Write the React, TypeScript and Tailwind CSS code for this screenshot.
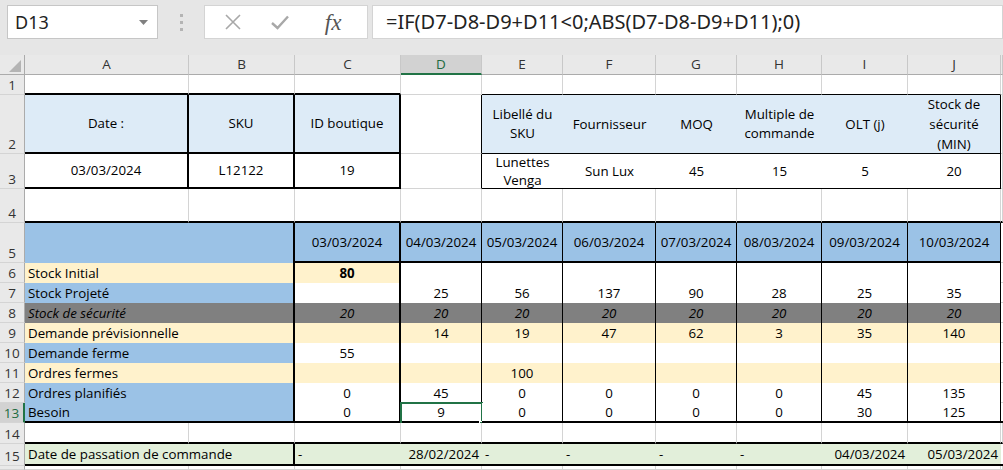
import clsx from "clsx";
import type { ReactNode } from "react";

// border kinds: g = gridline, t = thin black, T = thick black, n = none
type Br = "g" | "t" | "T" | "n";
type Align = "c" | "l" | "r";

const RIGHT: Record<Br, string> = {
  g: "border-r border-r-[#d4d4d4]",
  t: "border-r border-r-black",
  T: "border-r-2 border-r-black",
  n: "",
};
const BOTTOM: Record<Br, string> = {
  g: "border-b border-b-[#d4d4d4]",
  t: "border-b border-b-black",
  T: "border-b-2 border-b-black",
  n: "",
};
const ALIGN: Record<Align, string> = {
  c: "justify-center text-center",
  l: "justify-start pl-[3px]",
  r: "justify-end pr-[3px]",
};

const FILL = {
  w: "bg-white",
  lb: "bg-[#ddebf7]",
  b: "bg-[#9bc2e6]",
  o: "bg-[#fff2cc]",
  g: "bg-[#808080]",
  gr: "bg-[#e2efda]",
  none: "bg-white",
};
type Fill = keyof typeof FILL;

type CellProps = {
  text?: ReactNode;
  span?: boolean;
  fill?: Fill;
  r?: Br;
  b?: Br;
  align?: Align;
  bold?: boolean;
  italic?: boolean;
  children?: ReactNode;
};

function Cell({ text, span, fill = "none", r = "g", b = "g", align = "c", bold, italic, children }: CellProps) {
  return (
    <div
      className={clsx(
        "relative flex items-center whitespace-nowrap text-black",
        span && "col-span-2",
        FILL[fill],
        RIGHT[r],
        BOTTOM[b],
        ALIGN[align],
        bold && "font-bold",
        italic && "italic"
      )}
    >
      {text}
      {children}
    </div>
  );
}

function RowHead({ n, active }: { n: number | string; active?: boolean }) {
  return (
    <div
      className={clsx(
        "flex items-end justify-center border-b border-b-[#d4d4d4] text-[13.5px] leading-[18px]",
        active
          ? "bg-[#d2d2d2] text-[#1e6b41] border-r-2 border-r-[#217346]"
          : "bg-[#e9e9e9] text-[#333] border-r border-r-[#ababab]"
      )}
    >
      {n}
    </div>
  );
}

const COLS = ["A", "B", "C", "D", "E", "F", "G", "H", "I", "J", ""];

const DATES = ["04/03/2024", "05/03/2024", "06/03/2024", "07/03/2024", "08/03/2024", "09/03/2024", "10/03/2024"];

const ROWS: { label: string; lf: Fill; cf: Fill; df: Fill; c: string; d: string[]; bold?: boolean; italic?: boolean }[] = [
  { label: "Stock Initial", lf: "o", cf: "o", df: "w", c: "80", d: ["", "", "", "", "", "", ""], bold: true },
  { label: "Stock Projeté", lf: "b", cf: "w", df: "w", c: "", d: ["25", "56", "137", "90", "28", "25", "35"] },
  { label: "Stock de sécurité", lf: "g", cf: "g", df: "g", c: "20", d: ["20", "20", "20", "20", "20", "20", "20"], italic: true },
  { label: "Demande prévisionnelle", lf: "o", cf: "o", df: "o", c: "", d: ["14", "19", "47", "62", "3", "35", "140"] },
  { label: "Demande ferme", lf: "b", cf: "w", df: "w", c: "55", d: ["", "", "", "", "", "", ""] },
  { label: "Ordres fermes", lf: "o", cf: "o", df: "o", c: "", d: ["", "100", "", "", "", "", ""] },
  { label: "Ordres planifiés", lf: "b", cf: "w", df: "w", c: "0", d: ["45", "0", "0", "0", "0", "45", "135"] },
  { label: "Besoin", lf: "b", cf: "w", df: "w", c: "0", d: ["9", "0", "0", "0", "0", "30", "125"] },
];

const XIcon = () => (
  <svg width="16" height="16" viewBox="0 0 16 16" fill="none" stroke="#a8a8a8" strokeWidth="1.6">
    <path d="M1 1l14 14M15 1L1 15" />
  </svg>
);
const CheckIcon = () => (
  <svg width="18" height="15" viewBox="0 0 18 15" fill="none" stroke="#a8a8a8" strokeWidth="2.4">
    <polyline points="1 8 6.5 13 17 1.5" />
  </svg>
);

function FormulaBar() {
  return (
    <div className="h-[55px] bg-[#e6e6e6] flex items-start pt-[5px] pl-[7px] font-['Noto_Sans',sans-serif]">
      <div className="w-[151px] h-[34px] bg-white border border-[#c6c6c6] flex items-center justify-between pl-[7px] pr-[9px] text-[18px] text-[#222]">
        <span>D13</span>
        <svg width="9" height="5" viewBox="0 0 9 5">
          <path d="M0 0h9L4.5 5z" fill="#808080" />
        </svg>
      </div>
      <div className="w-[46px] h-[34px] flex flex-col items-center justify-center gap-[4px]">
        <span className="w-[3px] h-[3px] bg-[#b4b4b4]" />
        <span className="w-[3px] h-[3px] bg-[#b4b4b4]" />
        <span className="w-[3px] h-[3px] bg-[#b4b4b4]" />
      </div>
      <div className="w-[164px] h-[34px] bg-white border border-[#d4d4d4] flex items-center">
        <span className="w-[60px] flex justify-center">
          <XIcon />
        </span>
        <span className="w-[40px] flex justify-center">
          <CheckIcon />
        </span>
        <span className="w-[72px] flex justify-center font-['Liberation_Serif',serif] italic text-[23px] text-[#555] leading-none">
          fx
        </span>
      </div>
      <div className="ml-[4px] flex-1 h-[34px] bg-white border border-[#d4d4d4] flex items-center pl-[13px] text-[20px] text-[#222]">
        =IF(D7-D8-D9+D11&lt;0;ABS(D7-D8-D9+D11);0)
      </div>
    </div>
  );
}

export default function App() {
  return (
    <div className="w-[1003px] h-[470px] overflow-hidden bg-white">
      <FormulaBar />
      <div className="grid grid-cols-[25px_164px_106px_106px_81px_81px_93px_81px_85px_86px_93px_2px] grid-rows-[20px_20px_59px_35px_34px_40px_repeat(8,20px)_21px_22px_4px] font-['Open_Sans',sans-serif] text-[13.3px] leading-[19px]">
        {/* column headers */}
        <div className="bg-[#e9e9e9] border-r border-r-[#ababab] border-b border-b-[#ababab] flex items-end justify-end pr-[3px] pb-[2px]">
          <svg width="12" height="12" viewBox="0 0 12 12">
            <polygon points="12,0 12,12 0,12" fill="#b4b4b4" />
          </svg>
        </div>
        {COLS.map((c) => (
          <div
            key={"h" + c}
            className={clsx(
              "flex items-center justify-center border-r border-r-[#c8c8c8] text-[13.5px]",
              c === "D"
                ? "bg-[#d2d2d2] text-[#1e6b41] border-b-2 border-b-[#217346]"
                : "bg-[#e9e9e9] text-[#333] border-b border-b-[#ababab]"
            )}
          >
            {c}
          </div>
        ))}

        {/* row 1 */}
        <RowHead n={1} />
        <Cell b="T" />
        <Cell b="T" />
        <Cell b="T" />
        <Cell />
        <Cell b="t" />
        <Cell b="t" />
        <Cell b="t" />
        <Cell b="t" />
        <Cell b="t" />
        <Cell b="t" />
        <Cell />

        {/* row 2 */}
        <RowHead n={2} />
        <Cell fill="lb" r="T" b="T" text="Date :" />
        <Cell fill="lb" r="T" b="T" text="SKU" />
        <Cell fill="lb" r="T" b="T" text="ID boutique" />
        <Cell r="t" />
        <Cell fill="lb" r="n" b="t" text={<span>Libellé du<br />SKU</span>} />
        <Cell fill="lb" r="n" b="t" text="Fournisseur" />
        <Cell fill="lb" r="n" b="t" text="MOQ" />
        <Cell fill="lb" r="n" b="t" text={<span>Multiple de<br />commande</span>} />
        <Cell fill="lb" r="n" b="t" text="OLT (j)" />
        <Cell fill="lb" r="t" b="t" text={<span className="leading-[20px]">Stock de<br />sécurité<br />(MIN)</span>} />
        <Cell />

        {/* row 3 */}
        <RowHead n={3} />
        <Cell r="T" b="T" text="03/03/2024" />
        <Cell r="T" b="T" text="L12122" />
        <Cell r="T" b="T" text="19" />
        <Cell r="t" />
        <Cell fill="w" r="n" b="t" text={<span className="leading-[18px]">Lunettes<br />Venga</span>} />
        <Cell fill="w" r="n" b="t" text="Sun Lux" />
        <Cell fill="w" r="n" b="t" text="45" />
        <Cell fill="w" r="n" b="t" text="15" />
        <Cell fill="w" r="n" b="t" text="5" />
        <Cell fill="w" r="t" b="t" text="20" />
        <Cell />

        {/* row 4 */}
        <RowHead n={4} />
        {COLS.map((c) => (
          <Cell key={"r4" + c} b="T" />
        ))}

        {/* row 5 */}
        <RowHead n={5} />
        <Cell span fill="b" r="T" b="n" />
        <Cell fill="b" r="T" b="T" text="03/03/2024" />
        {DATES.map((d) => (
          <Cell key={d} fill="b" r="t" b="T" text={d} />
        ))}
        <Cell r="n" />

        {/* rows 6-13 */}
        {ROWS.map((row, i) => {
          const last = i === ROWS.length - 1;
          const bb: Br = last ? "T" : "n";
          return [
            <RowHead key={"rh" + i} n={i + 6} active={last} />,
            <Cell key={"l" + i} span fill={row.lf} r="T" b={bb} align="l" italic={row.italic} text={row.label} />,
            <Cell key={"c" + i} fill={row.cf} r="T" b={bb} italic={row.italic} bold={row.bold} text={row.c} />,
            ...row.d.map((v, j) => (
              <Cell key={"d" + i + "-" + j} fill={row.df} r="t" b={bb} italic={row.italic} text={v}>
                {last && j === 0 && (
                  <div className="absolute left-[-1px] top-[-1px] w-[83px] h-[23px] border-2 border-[#217346]">
                    <div className="absolute right-[-4px] bottom-[-4px] w-[6px] h-[6px] bg-[#217346] border border-white" />
                  </div>
                )}
              </Cell>
            )),
            <Cell key={"k" + i} r="n" b={last ? "T" : "g"} />,
          ];
        })}

        {/* row 14 */}
        <RowHead n={14} />
        {COLS.map((c) => (
          <Cell key={"r14" + c} b="T" />
        ))}

        {/* row 15 */}
        <RowHead n={15} />
        <Cell span fill="gr" r="T" b="T" align="l" text="Date de passation de commande" />
        <Cell fill="gr" r="n" b="T" align="l" text="-" />
        <Cell fill="gr" r="n" b="T" align="r" text="28/02/2024" />
        <Cell fill="gr" r="n" b="T" align="l" text="-" />
        <Cell fill="gr" r="n" b="T" align="l" text="-" />
        <Cell fill="gr" r="n" b="T" align="l" text="-" />
        <Cell fill="gr" r="n" b="T" align="l" text="-" />
        <Cell fill="gr" r="n" b="T" align="r" text="04/03/2024" />
        <Cell fill="gr" r="n" b="T" align="r" text="05/03/2024" />
        <Cell r="n" b="T" />

        {/* row 16 */}
        <RowHead n="" />
        {COLS.map((c) => (
          <Cell key={"r16" + c} />
        ))}
      </div>
    </div>
  );
}
